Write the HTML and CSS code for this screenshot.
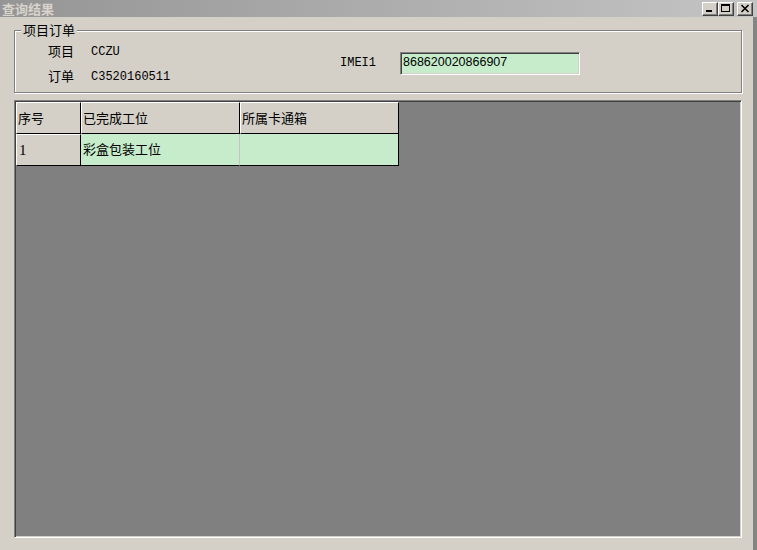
FILE: index.html
```html
<!DOCTYPE html>
<html>
<head>
<meta charset="utf-8">
<link rel="stylesheet" href="styles.css">
</head>
<body>
<div class="window">
  <div class="titlebar">
    <span class="title">查询结果</span>
    <div class="caption-btns">
      <div class="cbtn">
        <svg width="14" height="12" viewBox="0 0 14 12" shape-rendering="crispEdges"><rect x="3" y="7" width="6" height="2" fill="#000"/></svg>
      </div>
      <div class="cbtn">
        <svg width="14" height="12" viewBox="0 0 14 12" shape-rendering="crispEdges"><rect x="2" y="1" width="9" height="2" fill="#000"/><rect x="2" y="1" width="1" height="8" fill="#000"/><rect x="10" y="1" width="1" height="8" fill="#000"/><rect x="2" y="8" width="9" height="1" fill="#000"/></svg>
      </div>
      <div class="cbtn close">
        <svg width="14" height="12" viewBox="0 0 14 12"><path d="M3.5 2 L10.5 9 M10.5 2 L3.5 9" stroke="#000" stroke-width="1.6"/></svg>
      </div>
    </div>
  </div>
  <div class="body">
    <div class="client">
      <div class="group">
        <span class="legend">项目订单</span>
        <div class="group-inner">
          <div class="fields">
            <div class="row"><span class="lbl">项目</span><span class="val">CCZU</span></div>
            <div class="row"><span class="lbl">订单</span><span class="val">C3520160511</span></div>
          </div>
          <div class="imei">
            <span class="lbl2">IMEI1</span>
            <div class="input">868620020866907</div>
          </div>
        </div>
      </div>
      <div class="grid">
        <table class="sgrid">
          <tr>
            <th class="c1">序号</th>
            <th class="c2">已完成工位</th>
            <th class="c3">所属卡通箱</th>
          </tr>
          <tr>
            <td class="fixed c1">1</td>
            <td class="data c2 mid">彩盒包装工位</td>
            <td class="data c3 last"></td>
          </tr>
        </table>
      </div>
    </div>
    <div class="frame-right"></div>
  </div>
</div>
</body>
</html>
```
FILE: styles.css
```css
html, body {
  margin: 0;
  padding: 0;
}
body {
  width: 757px;
  height: 550px;
  overflow: hidden;
  background: #d4d0c8;
  font-family: "Noto Sans CJK SC", "Liberation Sans", sans-serif;
  font-size: 13px;
  color: #000;
}
.window {
  display: flex;
  flex-direction: column;
  height: 550px;
}
.titlebar {
  height: 17px;
  display: flex;
  justify-content: space-between;
  background: linear-gradient(to right, #959595, #c4c4c4);
}
.title {
  padding-left: 2px;
  font-weight: bold;
  font-size: 13px;
  line-height: 17px;
  color: #d8d4cc;
}
.caption-btns {
  display: flex;
  padding-top: 2px;
  padding-right: 4px;
}
.cbtn {
  width: 16px;
  height: 14px;
  box-sizing: border-box;
  background: #d4d0c8;
  border: 1px solid;
  border-color: #fff #404040 #404040 #fff;
  box-shadow: inset -1px -1px 0 #808080;
  display: flex;
}
.cbtn.close {
  margin-left: 3px;
}
.body {
  flex: 1;
  display: flex;
}
.client {
  width: 753px;
  padding-left: 14px;
  box-sizing: border-box;
}
.frame-right {
  width: 4px;
  background: #858585;
}
.group {
  position: relative;
  margin-top: 13px;
  width: 728px;
  height: 63px;
  box-sizing: border-box;
  border: 1px solid #808080;
  box-shadow: 1px 1px 0 #fff, inset 1px 1px 0 #fff;
}
.legend {
  position: absolute;
  top: -8px;
  left: 6px;
  padding: 0 2px;
  background: #d4d0c8;
  line-height: 14px;
  font-size: 13px;
}
.group-inner {
  display: flex;
  padding-top: 7px;
  padding-left: 33px;
}
.fields {
  width: 292px;
}
.row {
  display: flex;
  height: 25px;
  line-height: 25px;
}
.lbl {
  width: 43px;
}
.val, .lbl2 {
  font-family: "Liberation Mono", monospace;
  font-size: 12px;
}
.val {
  padding-top: 2px;
}
.imei {
  display: flex;
  margin-top: 14px;
  height: 23px;
}
.lbl2 {
  width: 60px;
  line-height: 23px;
}
.input {
  width: 180px;
  height: 23px;
  box-sizing: border-box;
  border: 1px solid;
  border-color: #808080 #fff #fff #808080;
  box-shadow: inset 1px 1px 0 #404040, inset -1px -1px 0 #d4d0c8;
  background: #c6eccb;
  padding-left: 2px;
  font-family: "Liberation Sans", sans-serif;
  font-size: 12.5px;
  line-height: 19px;
}
.grid {
  margin-top: 7px;
  width: 728px;
  height: 438px;
  box-sizing: border-box;
  border: 1px solid;
  border-color: #808080 #fff #fff #808080;
  box-shadow: inset 1px 1px 0 #404040, inset -1px -1px 0 #d4d0c8;
  background: #808080;
  padding: 1px 0 0 1px;
}
.sgrid {
  border-collapse: separate;
  border-spacing: 0;
}
.sgrid th, .sgrid td {
  height: 32px;
  box-sizing: border-box;
  padding: 0 0 2px 1px;
  text-align: left;
  vertical-align: middle;
  font-weight: normal;
  font-size: 13px;
  white-space: nowrap;
}
.sgrid th, .sgrid td.fixed {
  background: #d4d0c8;
  border-top: 1px solid #fff;
  border-left: 1px solid #fff;
  border-right: 1px solid #000;
  border-bottom: 1px solid #000;
}
.sgrid td.fixed {
  font-family: "Liberation Serif", serif;
  font-size: 15px;
  padding-left: 2px;
  padding-bottom: 0;
}
.sgrid td.data {
  background: #c6eccb;
  border-bottom: 1px solid #000;
  padding-left: 2px;
}
.sgrid td.mid {
  border-right: 1px solid #c4c4c4;
}
.sgrid td.last {
  border-right: 1px solid #000;
}
.c1 { width: 65px; }
.c2 { width: 159px; }
.c3 { width: 159px; }
.sgrid td.c2 { width: 158px; }
```
